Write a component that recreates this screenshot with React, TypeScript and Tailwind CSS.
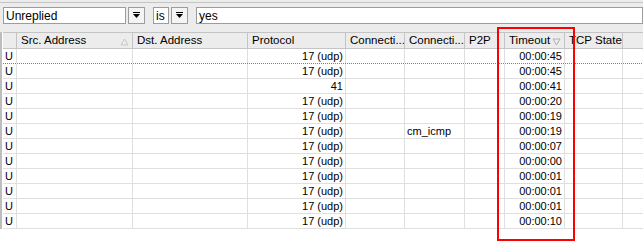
import React from 'react';

const cols = [
  { label: '', w: 14 },
  { label: 'Src. Address', w: 116, sort: 'up' },
  { label: 'Dst. Address', w: 115 },
  { label: 'Protocol', w: 98 },
  { label: 'Connecti...', w: 59 },
  { label: 'Connecti...', w: 60 },
  { label: 'P2P', w: 40 },
  { label: 'Timeout', w: 60, sort: 'down' },
  { label: 'TCP State', w: 58 },
  { label: '', w: 21 },
];

const rows = [
  ['17 (udp)', '', '00:00:45'],
  ['17 (udp)', '', '00:00:45'],
  ['41', '', '00:00:41'],
  ['17 (udp)', '', '00:00:20'],
  ['17 (udp)', '', '00:00:19'],
  ['17 (udp)', 'cm_icmp', '00:00:19'],
  ['17 (udp)', '', '00:00:07'],
  ['17 (udp)', '', '00:00:00'],
  ['17 (udp)', '', '00:00:01'],
  ['17 (udp)', '', '00:00:01'],
  ['17 (udp)', '', '00:00:01'],
  ['17 (udp)', '', '00:00:10'],
];

const DropBtn = () => (
  <div className="flex h-[17px] w-[17px] items-center justify-center border border-[#9c9c9c] bg-[#f4f4f4]">
    <svg width="9" height="9" viewBox="0 0 9 9">
      <rect x="1" y="1" width="7" height="1" fill="#000" />
      <polygon points="1,3 8,3 4.5,7" fill="#000" />
    </svg>
  </div>
);

const SortMark = ({ dir }: { dir: string }) => (
  <svg width="9" height="8" viewBox="0 0 9 8" className="absolute right-[3px] top-[5px]">
    {dir === 'up' ? (
      <polygon points="1,7 8,7 4.5,1" fill="none" stroke="#c8c8c8" />
    ) : (
      <polygon points="1,1 8,1 4.5,7" fill="none" stroke="#b0b0b0" />
    )}
  </svg>
);

export default function App() {
  return (
    <div className="relative h-[250px] w-[643px] overflow-hidden bg-white font-['Liberation_Sans',Arial,sans-serif] text-[11px] text-black">
      <div className="h-[3px] border-b border-[#c4c4c4] bg-[#ececec]" />
      <div className="flex h-[29px] items-start bg-[#ececec] pl-[3px] pt-[4px]">
        <div className="flex h-[17px] w-[123px] items-center border border-[#9c9c9c] bg-white pl-[2px] text-[12px]">Unreplied</div>
        <div className="ml-[2px]"><DropBtn /></div>
        <div className="ml-[8px] flex h-[17px] w-[16px] items-center border border-[#9c9c9c] bg-white pl-[2px] text-[12px]">is</div>
        <div className="ml-[2px]"><DropBtn /></div>
        <div className="ml-[8px] flex h-[17px] flex-1 items-center border border-[#9c9c9c] bg-white pl-[2px] text-[12px]">yes</div>
      </div>
      <div className="flex border-l-2 border-[#bdbdbd] pl-[1px]">
        <div className="flex flex-col">
          <div className="flex h-[17px] border-y border-[#c4c4c4] bg-[#ececec]">
            {cols.map((c, i) => (
              <div
                key={i}
                style={{ width: c.w }}
                className="relative flex shrink-0 items-center overflow-hidden whitespace-nowrap border-r border-[#c4c4c4] pl-[4px] text-[11.5px] leading-none"
              >
                {c.label}
                {c.sort && <SortMark dir={c.sort} />}
              </div>
            ))}
          </div>
          {rows.map((r, ri) => (
            <div
              key={ri}
              className={`flex h-[15px] border-b ${ri === 0 ? 'border-dotted border-[#808080]' : 'border-[#dfdfdf]'}`}
            >
              {cols.map((c, i) => {
                let text = '';
                let right = false;
                if (i === 0) text = 'U';
                if (i === 3) { text = r[0]; right = true; }
                if (i === 5) text = r[1];
                if (i === 7) { text = r[2]; right = true; }
                return (
                  <div
                    key={i}
                    style={{ width: c.w }}
                    className={`flex shrink-0 items-center whitespace-nowrap border-r border-[#dfdfdf] text-[11px] leading-none ${right ? 'justify-end pr-[2px]' : 'pl-[2px]'}`}
                  >
                    {text}
                  </div>
                );
              })}
            </div>
          ))}
        </div>
      </div>
      <div className="absolute left-[497px] top-[27px] h-[214px] w-[78px] border-2 border-[#ff0000]" />
    </div>
  );
}
